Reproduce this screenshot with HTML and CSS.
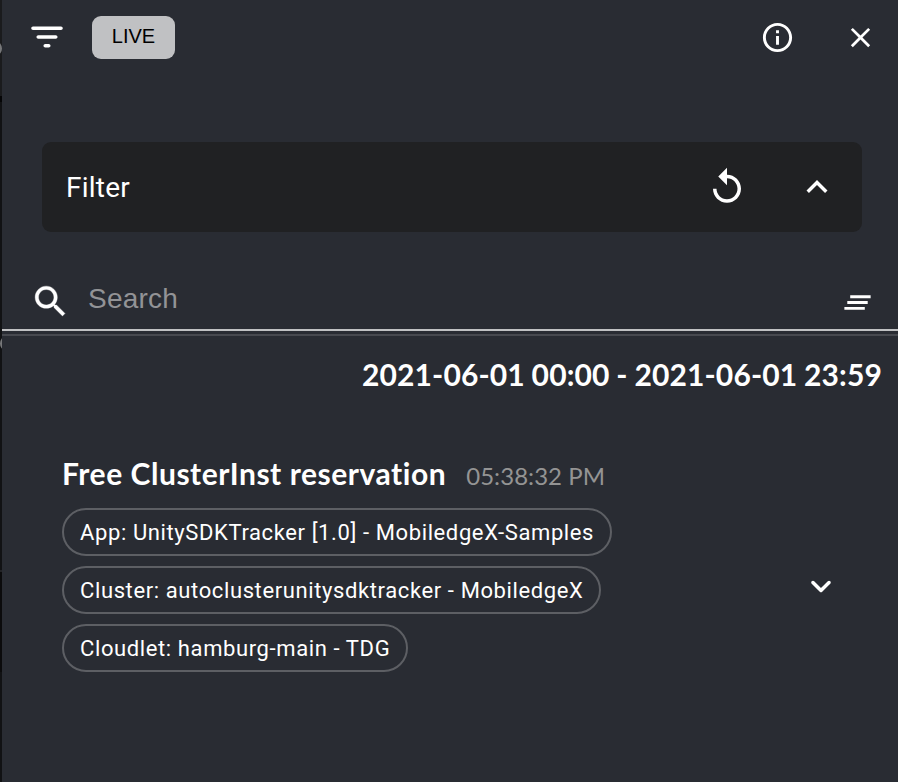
FILE: index.html
```html
<!DOCTYPE html>
<html lang="en">
<head>
<meta charset="utf-8">
<title>Events</title>
<link rel="stylesheet" href="styles.css">
</head>
<body>
<div class="backdrop"><i class="arc arc-top"></i><i class="arc arc-mid"></i></div>
<main class="panel">
  <header class="toolbar">
    <svg class="icon-menu" width="42" height="42" viewBox="0 0 24 24"><path d="M11 18h2c.55 0 1-.45 1-1s-.45-1-1-1h-2c-.55 0-1 .45-1 1s.45 1 1 1zM3 7c0 .55.45 1 1 1h16c.55 0 1-.45 1-1s-.45-1-1-1H4c-.55 0-1 .45-1 1zm4 6h10c.55 0 1-.45 1-1s-.45-1-1-1H7c-.55 0-1 .45-1 1s.45 1 1 1z"/></svg>
    <button class="live">LIVE</button>
    <svg class="icon-info" width="35" height="35" viewBox="0 0 24 24"><path d="M11 7h2v2h-2zm0 4h2v6h-2zm1-9C6.48 2 2 6.48 2 12s4.48 10 10 10 10-4.48 10-10S17.52 2 12 2zm0 18c-4.41 0-8-3.59-8-8s3.59-8 8-8 8 3.59 8 8-3.59 8-8 8z"/></svg>
    <svg class="icon-close" width="33" height="33" viewBox="0 0 24 24"><path d="M19 6.41L17.59 5 12 10.59 6.41 5 5 6.41 10.59 12 5 17.59 6.41 19 12 13.41 17.59 19 19 17.59 13.41 12z"/></svg>
  </header>
  <section class="filter">
    <span class="filter-title">Filter</span>
    <svg width="42" height="42" viewBox="0 0 24 24"><path d="M12 5V1L7 6l5 5V7c3.31 0 6 2.69 6 6s-2.69 6-6 6-6-2.69-6-6H4c0 4.42 3.58 8 8 8s8-3.58 8-8-3.58-8-8-8z"/></svg>
    <svg width="42" height="42" viewBox="0 0 24 24"><path d="M12 8l-6 6 1.41 1.41L12 10.83l4.59 4.58L18 14z"/></svg>
  </section>
  <div class="search">
    <svg width="41" height="41" viewBox="0 0 24 24"><path stroke="#fff" stroke-width=".2" d="M15.5 14h-.79l-.28-.27C15.41 12.59 16 11.11 16 9.5 16 5.91 13.09 3 9.5 3S3 5.91 3 9.5 5.91 16 9.5 16c1.61 0 3.09-.59 4.23-1.57l.27.28v.79l5 4.99L20.49 19l-4.99-5zm-6 0C7.01 14 5 11.99 5 9.5S7.01 5 9.5 5 14 7.01 14 9.5 11.99 14 9.5 14z"/></svg>
    <span class="placeholder">Search</span>
    <svg class="icon-clear" width="35" height="35" viewBox="0 0 24 24"><path d="M5 13h14v-2H5v2zm-2 4h14v-2H3v2zM7 7v2h14V7H7z"/></svg>
  </div>
  <div class="divider"></div>
  <div class="range">2021-06-01 00:00 - 2021-06-01 23:59</div>
  <article class="event">
    <div class="event-body">
      <div class="event-head"><h2>Free ClusterInst reservation</h2><time>05:38:32 PM</time></div>
      <ul class="chips">
        <li>App: UnitySDKTracker [1.0] - MobiledgeX-Samples</li>
        <li>Cluster: autoclusterunitysdktracker - MobiledgeX</li>
        <li>Cloudlet: hamburg-main - TDG</li>
      </ul>
    </div>
    <svg class="icon-expand" width="42" height="42" viewBox="0 0 24 24"><path d="M8.12 9.29L12 13.17l3.88-3.88c.39-.39 1.02-.39 1.41 0 .39.39.39 1.02 0 1.41l-4.59 4.59c-.39.39-1.02.39-1.41 0L6.7 10.7c-.39-.39-.39-1.02 0-1.41.39-.38 1.03-.39 1.42 0z"/></svg>
  </article>
</main>
</body>
</html>
```
FILE: styles.css
```css
* { box-sizing: border-box; }
body { margin: 0; height: 782px; display: flex; overflow: hidden; background: #292c33; color: #fff; font-family: Roboto, sans-serif; }
svg { display: block; fill: #fff; flex: none; }
.backdrop { position: relative; width: 2px; flex: none; overflow: hidden; background: linear-gradient(#1a1b1d 0 96px, #050506 96px 102px, #111214 102px 570px, #222326 570px 572px, #0b0b0c 572px 672px, #111214 672px); }
.arc { position: absolute; width: 10px; height: 13px; border: 2px solid #77787a; border-radius: 50%; }
.arc-top { left: -8px; top: 42px; }
.arc-mid { left: 0; top: 337px; }
.panel { flex: 1; min-width: 0; }
.toolbar { display: flex; align-items: center; height: 75px; padding: 0 19px 0 24px; }
.icon-menu { margin-top: -1px; }
.live { width: 83px; height: 43px; margin: 0 auto 0 24px; padding: 0 0 3px; border: 0; border-radius: 9px; background: #c0c1c3; color: #000; font: 20px "Liberation Sans", sans-serif; }
.icon-info { margin-right: 49px; }
.icon-close { margin-right: 2px; }
.filter { display: flex; align-items: center; height: 90px; margin: 67px 36px 0 40px; padding: 0 24px; border-radius: 9px; background: #202123; }
.filter svg { margin-right: 48px; }
.filter svg:last-child { margin-right: 0; }
.filter-title { flex: 1; font-size: 28px; letter-spacing: .25px; }
.search { display: flex; align-items: flex-start; height: 99px; padding: 49px 24px 0 28px; border-bottom: 2px solid #c0c1c3; }
.placeholder { flex: 1; margin: 2px 0 0 17px; color: #929396; font: 28px/32px "Liberation Sans", sans-serif; letter-spacing: .2px; }
.icon-clear { margin: 4px -.5px 0 0; }
.divider { height: 2px; margin-top: 3px; background: #47494f; }
.range { margin-top: 18px; padding-right: 16px; text-align: right; font: 700 30px/40px Lato, sans-serif; letter-spacing: .12px; word-spacing: -.6px; }
.event { display: flex; align-items: center; margin-top: 59px; padding: 0 56px 0 60px; }
.event-body { flex: 1; }
.event-head { display: flex; align-items: baseline; gap: 20px; height: 55px; line-height: 40px; }
h2 { margin: 0; font: 700 30px/40px Lato, sans-serif; letter-spacing: .54px; }
time { color: #949494; font: 24px/40px Lato, sans-serif; letter-spacing: .05px; }
.chips { display: flex; flex-direction: column; align-items: flex-start; gap: 10px; margin: 0; padding: 0; list-style: none; }
.chips li { height: 48px; padding: 1px 16px 0; border: 2px solid #5d5f64; border-radius: 24px; font-size: 22px; line-height: 44px; letter-spacing: .61px; white-space: nowrap; }
.icon-expand { margin-top: 46px; }
```
